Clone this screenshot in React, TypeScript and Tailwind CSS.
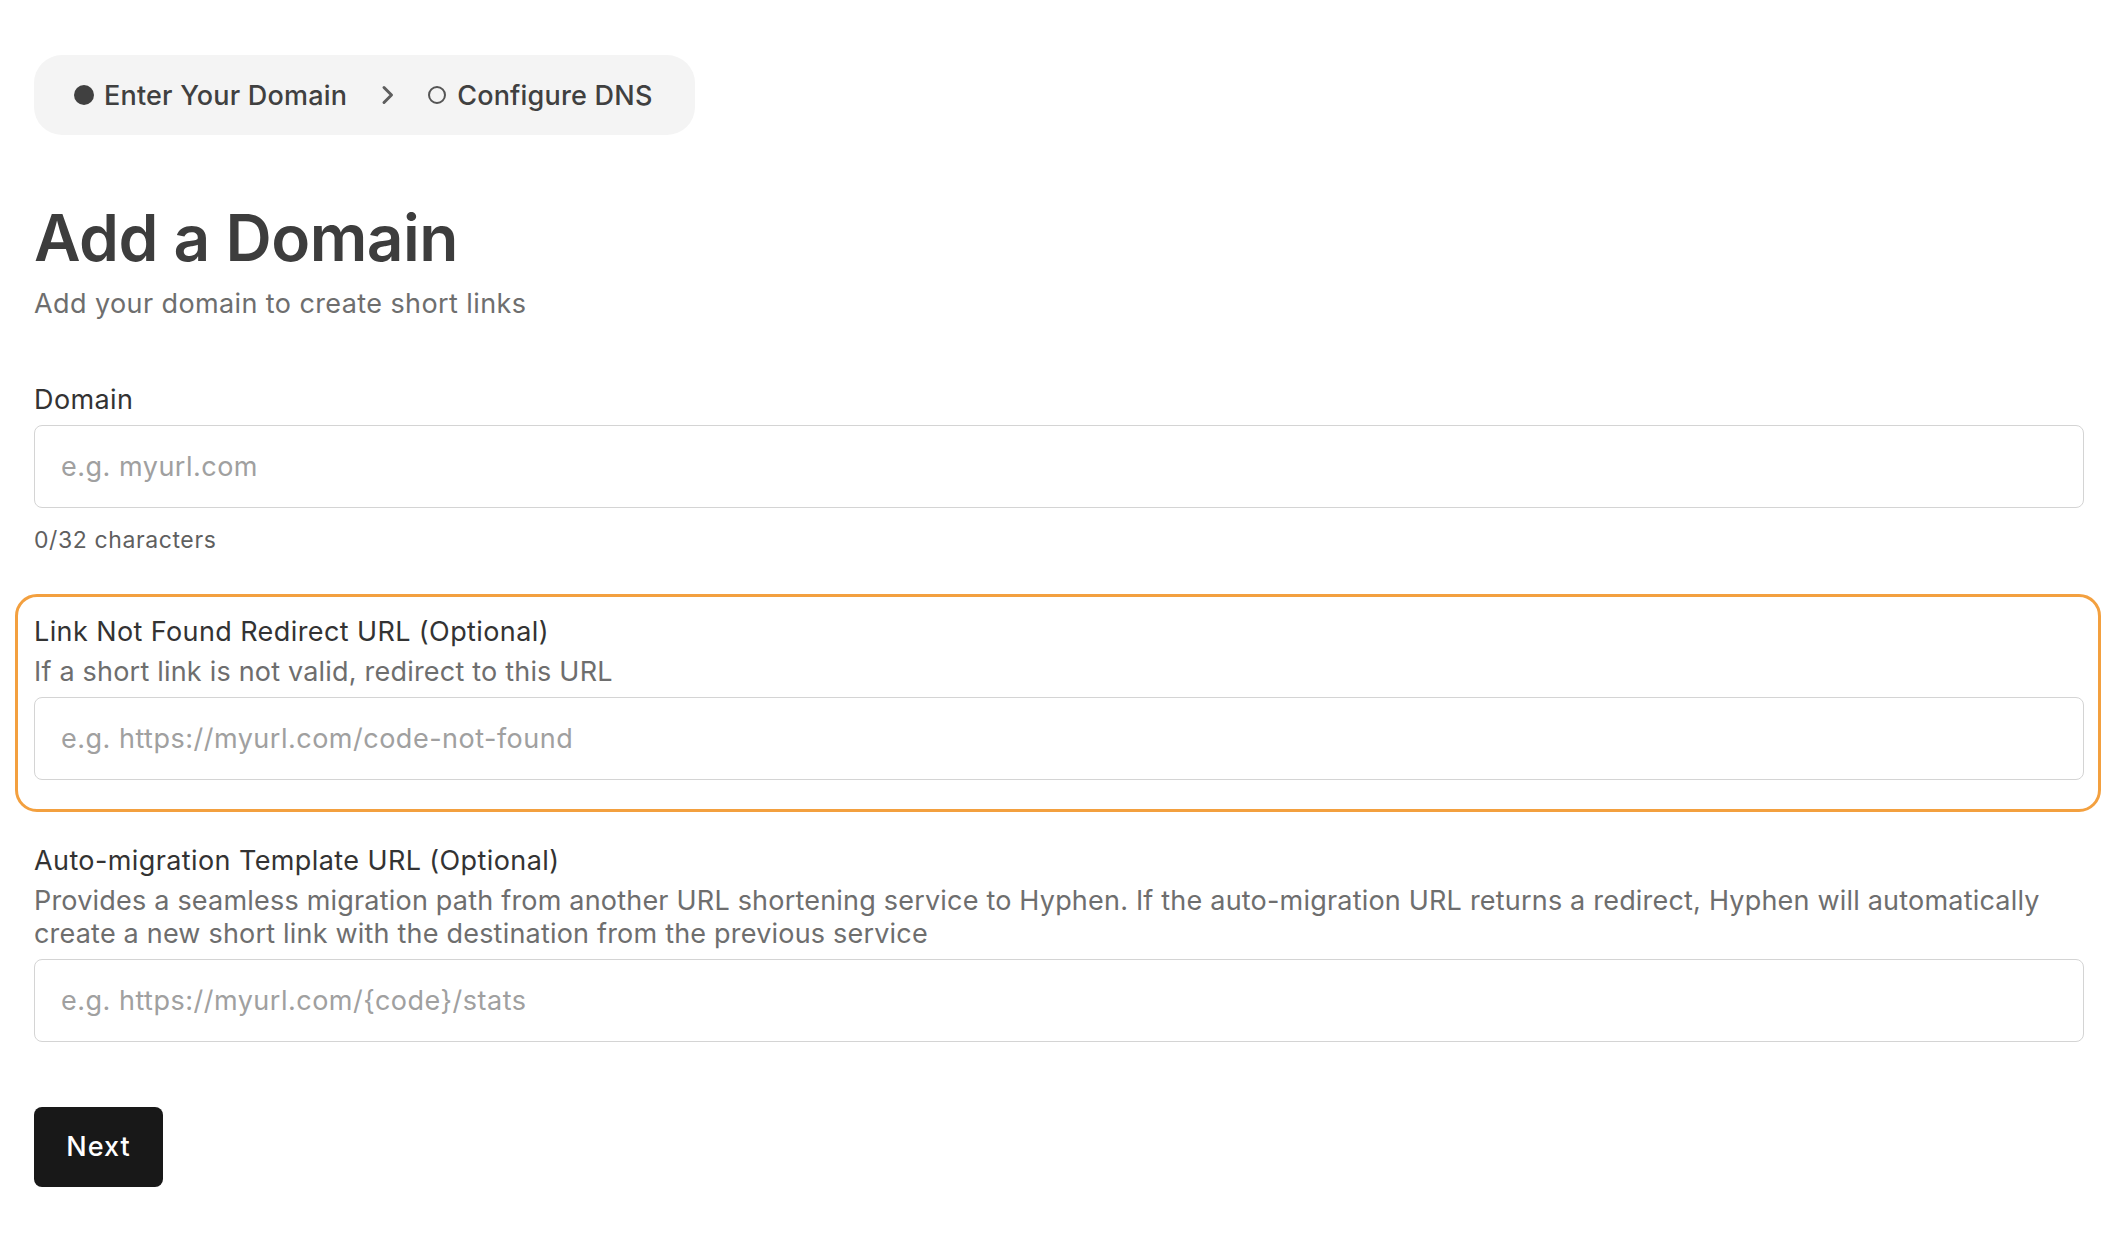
import React from "react";

function Chevron() {
  return (
    <svg width="16" height="22" viewBox="0 0 16 22" fill="none" className="shrink-0">
      <path d="M4 3.5 L11.5 11 L4 18.5" stroke="#5e5e5e" strokeWidth="3" strokeLinecap="round" strokeLinejoin="round" />
    </svg>
  );
}

function Field({
  label,
  description,
  placeholder,
}: {
  label: string;
  description?: string;
  placeholder: string;
}) {
  return (
    <div className="flex flex-col">
      <label className="text-[27px] leading-[40px] tracking-[0.4px] text-[#333333]">{label}</label>
      {description && (
        <p className="mt-[3px] text-[27px] leading-[33px] tracking-[0.2px] text-[#6e6e6e]">{description}</p>
      )}
      <input
        type="text"
        placeholder={placeholder}
        className={
          (description ? "mt-[9px] " : "mt-[5px] ") +
          "h-[83px] w-full rounded-lg border-[1.5px] border-[#d4d4d4] bg-white px-[26px] text-[27px] tracking-[0.5px] text-[#333333] placeholder:text-[#a0a0a0] outline-none"
        }
      />
    </div>
  );
}

export default function App() {
  return (
    <div
      className="min-h-screen bg-white pt-[55px] pl-[34px] pr-[36px] pb-[60px]"
      style={{ fontFamily: "Inter, 'Noto Sans', sans-serif" }}
    >
      <div className="inline-flex h-[80px] items-center rounded-[28px] bg-[#f4f4f4] pl-[40px] pr-[42px]">
        <div className="flex items-center gap-[10px]">
          <span className="flex h-5 w-5 items-center justify-center">
            <span className="h-[20px] w-[20px] rounded-full bg-[#404040]" />
          </span>
          <span className="text-[27px] font-medium leading-none tracking-[0.2px] text-[#404040]">Enter Your Domain</span>
        </div>
        <div className="ml-[33px] mr-[31px]">
          <Chevron />
        </div>
        <div className="flex items-center gap-[10px]">
          <span className="flex h-5 w-5 items-center justify-center">
            <span className="h-[18px] w-[18px] rounded-full border-2 border-[#555555]" />
          </span>
          <span className="text-[27px] font-medium leading-none tracking-[0.2px] text-[#404040]">Configure DNS</span>
        </div>
      </div>

      <h1 className="mt-[71px] text-[64px] font-semibold leading-[64px] tracking-[-0.5px] text-[#3d3d3d]">
        Add a Domain
      </h1>
      <p className="mt-[16px] text-[27px] leading-[36px] tracking-[0.4px] text-[#6e6e6e]">Add your domain to create short links</p>

      <div className="mt-[58px]">
        <Field label="Domain" placeholder="e.g. myurl.com" />
        <p className="mt-[17px] text-[23px] leading-[30px] tracking-[0.6px] text-[#5f5f5f]">0/32 characters</p>
      </div>

      <div className="-ml-[19px] -mr-[17px] mt-[39px] rounded-[22px] border-[3px] border-[#f3a03f] pl-[16px] pr-[14px] pt-[15px] pb-[29px]">
        <Field
          label="Link Not Found Redirect URL (Optional)"
          description="If a short link is not valid, redirect to this URL"
          placeholder="e.g. https://myurl.com/code-not-found"
        />
      </div>

      <div className="mt-[29px]">
        <Field
          label="Auto-migration Template URL (Optional)"
          description="Provides a seamless migration path from another URL shortening service to Hyphen. If the auto-migration URL returns a redirect, Hyphen will automatically create a new short link with the destination from the previous service"
          placeholder="e.g. https://myurl.com/{code}/stats"
        />
      </div>

      <button className="mt-[65px] flex h-[80px] w-[129px] items-center justify-center rounded-lg bg-[#181818] text-[27px] font-medium tracking-[1px] text-white">
        Next
      </button>
    </div>
  );
}
